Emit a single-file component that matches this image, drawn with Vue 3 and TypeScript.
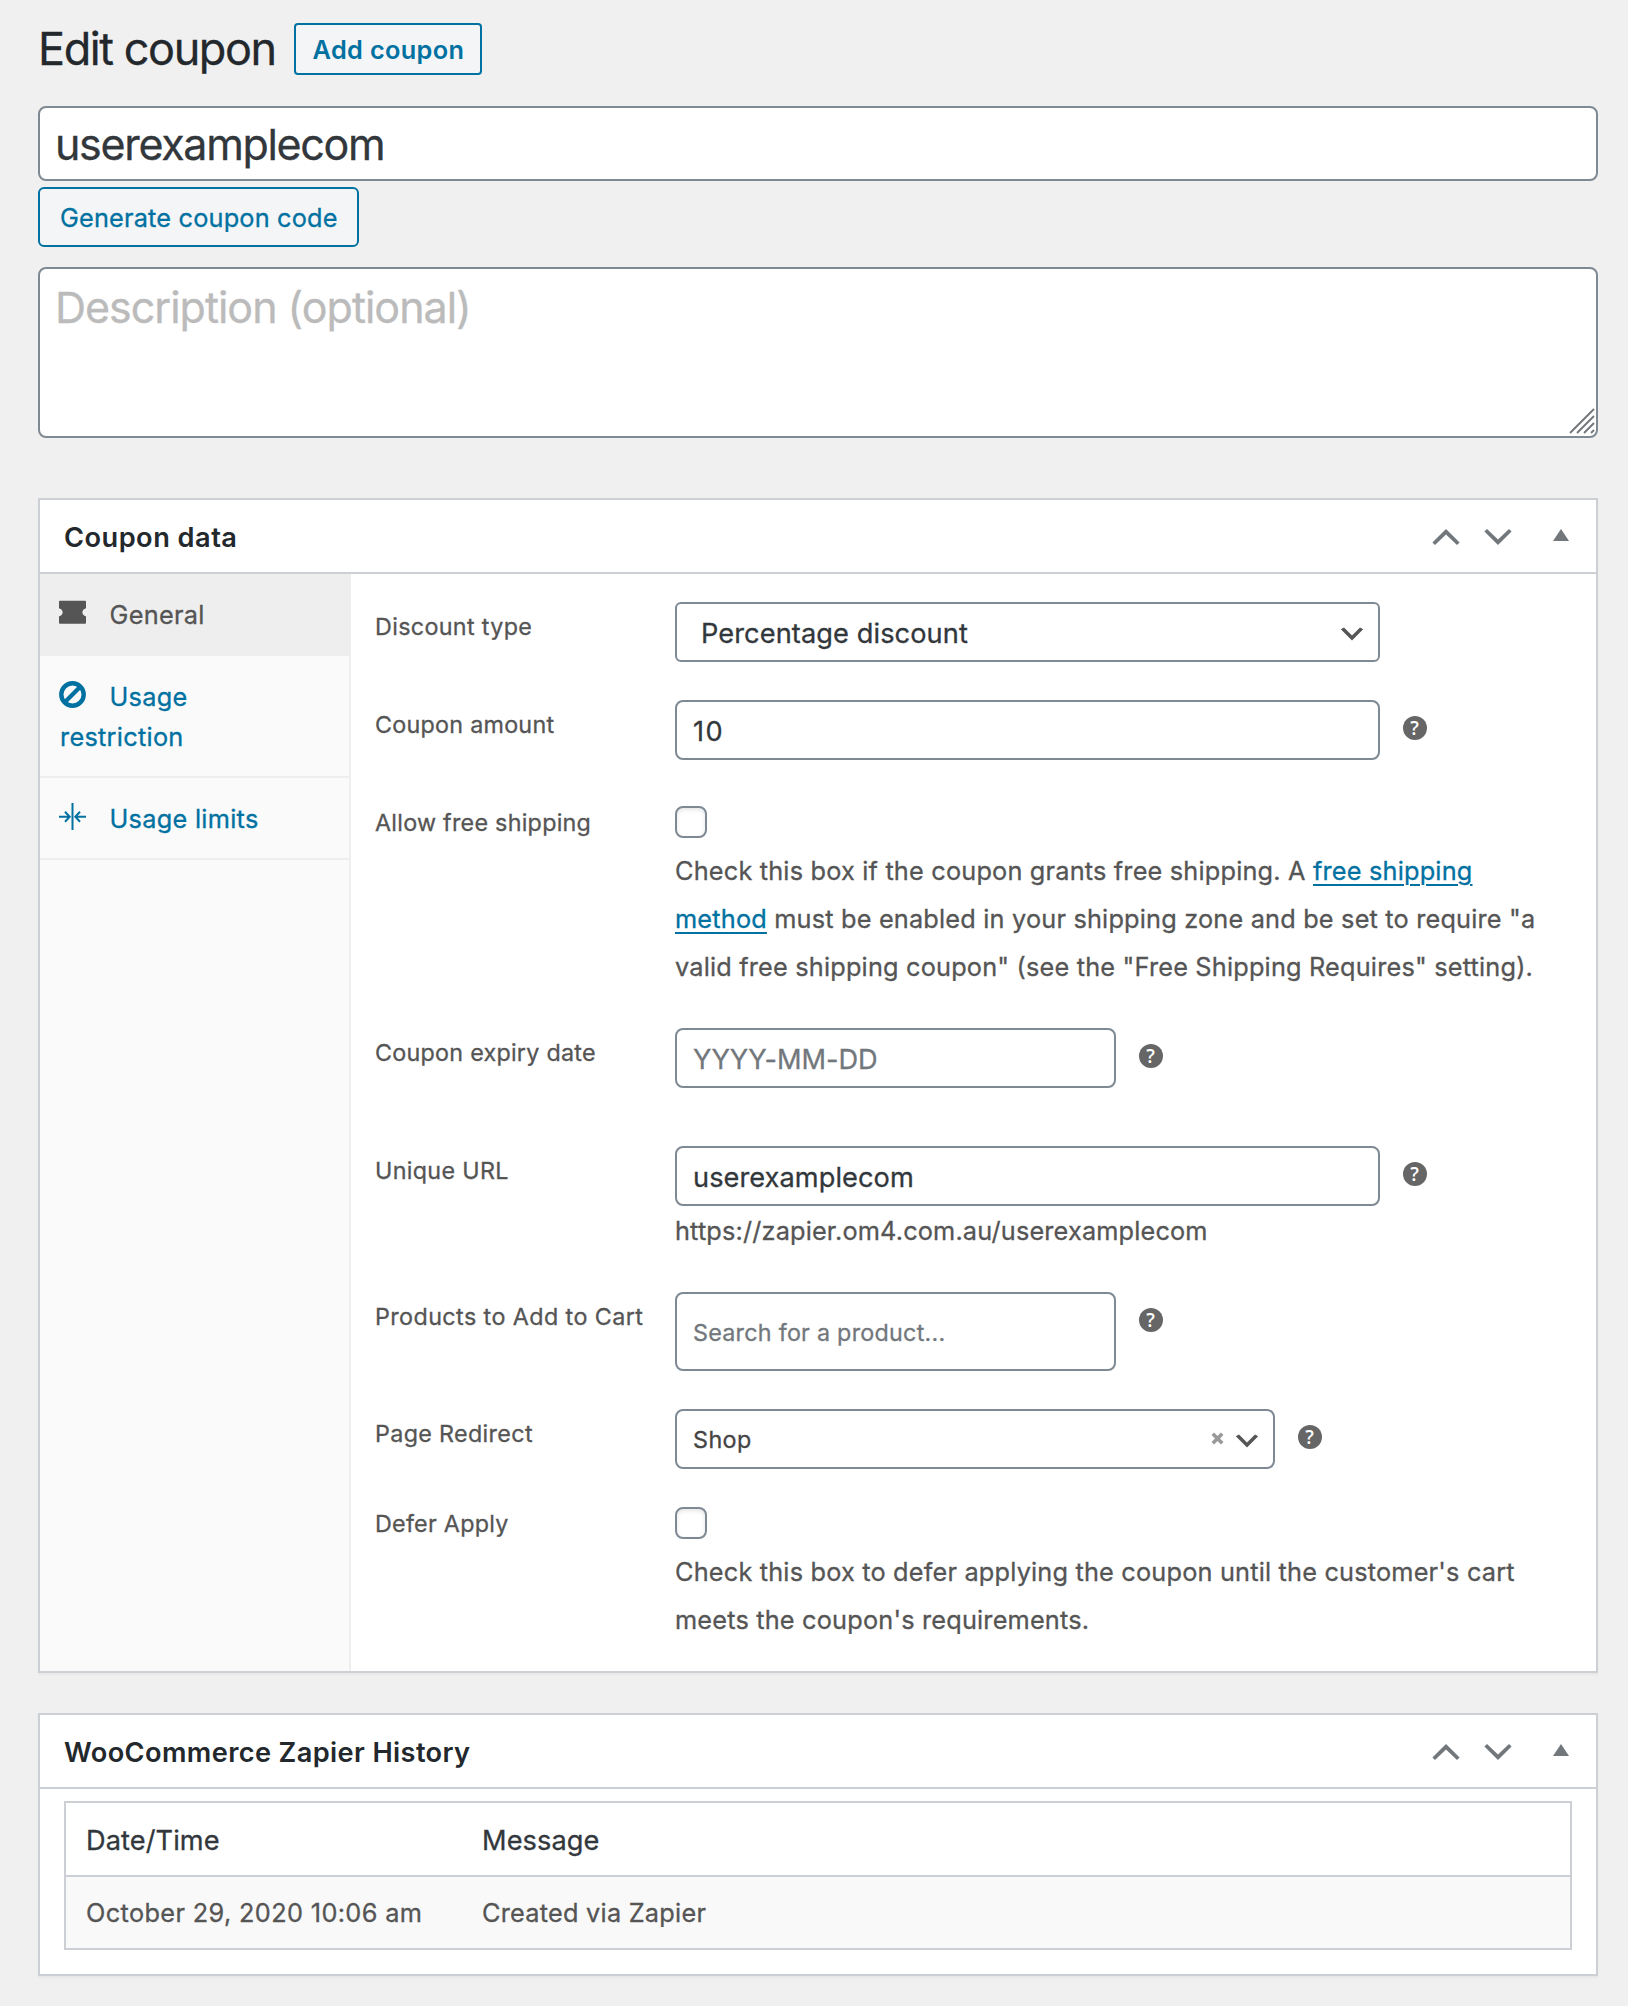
<script setup lang="ts">
import { ref } from 'vue'

interface Tab {
  id: string
  label: string
  icon: 'ticket' | 'ban' | 'limits'
}

interface HistoryEntry {
  date: string
  message: string
}

const tabs: Tab[] = [
  { id: 'general', label: 'General', icon: 'ticket' },
  { id: 'restriction', label: 'Usage restriction', icon: 'ban' },
  { id: 'limits', label: 'Usage limits', icon: 'limits' },
]
const activeTab = ref('general')

const code = ref('userexamplecom')
const description = ref('')
const amount = ref('10')
const discountType = ref('percent')
const freeShipping = ref(false)
const expiry = ref('')
const slug = ref('userexamplecom')
const deferApply = ref(false)

const history: HistoryEntry[] = [
  { date: 'October 29, 2020 10:06 am', message: 'Created via Zapier' },
]
</script>

<template>
  <main class="page">
    <header class="page-head">
      <h1>Edit coupon</h1>
      <a class="add-button">Add coupon</a>
    </header>

    <input v-model="code" class="title-input" type="text" />
    <button class="generate" type="button">Generate coupon code</button>
    <div class="desc-wrap">
      <textarea v-model="description" placeholder="Description (optional)"></textarea>
      <svg class="resizer" viewBox="0 0 26 26" aria-hidden="true">
        <path d="M1 25L25 1M8 25L25 8M15 25L25 15M22 25L25 22" />
      </svg>
    </div>

    <section class="panel">
      <div class="panel-head">
        <h2 class="h-coupon">Coupon data</h2>
        <div class="handles">
          <svg class="chev" viewBox="0 0 28 16"><path d="M.4 13.4L14 0l13.6 13.4L25 16 14 5.600 3 16z" /></svg>
          <svg class="chev" viewBox="0 0 28 16"><path d="M.4 2.600L14 16 27.600 2.600 25 0 14 10.400 3 0z" /></svg>
          <svg class="tri" viewBox="0 0 16 12"><path d="M8 0l8 12H0z" /></svg>
        </div>
      </div>
      <div class="coupon-body">
        <ul class="tabs">
          <li v-for="tab in tabs" :key="tab.id" :class="{ active: tab.id === activeTab }" @click="activeTab = tab.id">
            <svg v-if="tab.icon === 'ticket'" class="tab-icon" viewBox="0 0 27 27">
              <path fill="currentColor" d="M1 1.700h25a1 1 0 0 1 1 1V9.200q-3.600 1-3.600 4t3.600 4v6.500a1 1 0 0 1-1 1H1a1 1 0 0 1-1-1V17.200q3.600-1 3.600-4t-3.600-4V2.700a1 1 0 0 1 1-1z" />
            </svg>
            <svg v-else-if="tab.icon === 'ban'" class="tab-icon" viewBox="0 0 27 27">
              <g fill="none" stroke="currentColor">
                <circle cx="13.500" cy="13.500" r="11.200" stroke-width="4.400" />
                <path d="M6 21L21 6" stroke-width="4.200" />
              </g>
            </svg>
            <svg v-else class="tab-icon" viewBox="0 0 27 27">
              <path fill="none" stroke="currentColor" stroke-width="2" d="M13.500 0v27M0 13.700h10.500M6 8.700l4.700 5-4.700 5M27 13.700H16.500M21 8.700l-4.700 5 4.700 5" />
            </svg><span>{{ tab.label }}</span>
          </li>
        </ul>

        <div class="fields">
          <div class="row">
            <label>Discount type</label>
            <div class="control wide">
              <select v-model="discountType">
                <option value="percent">Percentage discount</option>
              </select>
              <svg class="arrow" viewBox="0 0 20 20"><path d="M5 6l5 5 5-5 2 1-7 7-7-7z" /></svg>
            </div>
          </div>

          <div class="row r-amount">
            <label class="tight">Coupon amount</label>
            <div class="control wide"><input v-model="amount" class="amount" type="text" /></div>
            <span class="help">?</span>
          </div>

          <div class="row r-check r-shipping">
            <label class="tight">Allow free shipping</label>
            <div class="stack">
              <input v-model="freeShipping" type="checkbox" />
              <p>Check this box if the coupon grants free shipping. A <a>free shipping method</a> must be enabled in your shipping zone and be set to require "a valid free shipping coupon" (see the "Free Shipping Requires" setting).</p>
            </div>
          </div>

          <div class="row r-expiry">
            <label class="tight">Coupon expiry date</label>
            <div class="control short"><input v-model="expiry" class="date" type="text" placeholder="YYYY-MM-DD" /></div>
            <span class="help">?</span>
          </div>

          <div class="row r-url">
            <label>Unique URL</label>
            <div class="stack">
              <div class="line">
                <div class="control wide"><input v-model="slug" type="text" /></div>
                <span class="help">?</span>
              </div>
              <p class="url">https://zapier.om4.com.au/userexamplecom</p>
            </div>
          </div>

          <div class="row r-products">
            <label class="loose">Products to Add to Cart</label>
            <div class="combo search">Search for a product...</div>
            <span class="help">?</span>
          </div>

          <div class="row r-redirect">
            <label>Page Redirect</label>
            <div class="combo redirect">
              <span>Shop</span>
              <svg class="clear" viewBox="0 0 13 13"><path d="M1.800 1.800l9.400 9.400M11.200 1.800l-9.400 9.400" /></svg>
              <svg class="arrow" viewBox="0 0 20 20"><path d="M5 6l5 5 5-5 2 1-7 7-7-7z" /></svg>
            </div>
            <span class="help">?</span>
          </div>

          <div class="row r-check r-defer">
            <label class="tight">Defer Apply</label>
            <div class="stack">
              <input v-model="deferApply" type="checkbox" />
              <p>Check this box to defer applying the coupon until the customer's cart meets the coupon's requirements.</p>
            </div>
          </div>
        </div>
      </div>
    </section>

    <section class="panel history">
      <div class="panel-head">
        <h2>WooCommerce Zapier History</h2>
        <div class="handles">
          <svg class="chev" viewBox="0 0 28 16"><path d="M.4 13.4L14 0l13.6 13.4L25 16 14 5.600 3 16z" /></svg>
          <svg class="chev" viewBox="0 0 28 16"><path d="M.4 2.600L14 16 27.600 2.600 25 0 14 10.400 3 0z" /></svg>
          <svg class="tri" viewBox="0 0 16 12"><path d="M8 0l8 12H0z" /></svg>
        </div>
      </div>
      <div class="table">
        <div class="tr th"><span>Date/Time</span><span>Message</span></div>
        <div v-for="entry in history" :key="entry.date" class="tr td">
          <span class="when">{{ entry.date }}</span><span class="what">{{ entry.message }}</span>
        </div>
      </div>
    </section>
  </main>
</template>

<style>
body {
  background: #f0f0f0;
}
</style>

<style scoped>
* {
  box-sizing: border-box;
}
.page {
  min-height: 2006px;
  padding: 23px 30px 30px 38px;
  background: #f0f0f0;
  font-family: Inter, "Liberation Sans", sans-serif;
  font-size: 25.3px;
  color: #555;
  -webkit-text-stroke: 0.3px currentColor;
}
input,
select,
textarea,
button {
  font-family: inherit;
  -webkit-text-stroke: inherit;
  margin: 0;
  outline: none;
}
.page-head {
  display: flex;
  height: 52px;
  margin-bottom: 31px;
}
h1 {
  margin: 0;
  width: 256px;
  white-space: nowrap;
  font-size: 45px;
  font-weight: 400;
  line-height: 52px;
  letter-spacing: -1.42px;
  color: #23282d;
}
.add-button {
  width: 188px;
  height: 52px;
  padding-left: 16.5px;
  border: 2px solid #0071a1;
  border-radius: 4px;
  background: #f3f5f6;
  color: #0071a1;
  font-size: 25.3px;
  font-weight: 600;
  line-height: 49px;
  letter-spacing: 0.36px;
  -webkit-text-stroke: 0;
}
.title-input {
  display: block;
  width: 1560px;
  height: 75px;
  padding: 1px 15px 0;
  border: 2px solid #7e8993;
  border-radius: 8px;
  background: #fff;
  font-size: 43px;
  letter-spacing: -1.32px;
  color: #32373c;
}
.generate {
  display: block;
  width: 321px;
  height: 60px;
  margin-top: 6px;
  padding: 0 0 0 20px;
  border: 2px solid #0071a1;
  border-radius: 6px;
  background: #f3f5f6;
  color: #0071a1;
  font-size: 25.3px;
  letter-spacing: 0.18px;
  text-align: left;
}
.desc-wrap {
  position: relative;
  width: 1560px;
  height: 171px;
  margin: 20px 0 60px;
}
textarea {
  display: block;
  width: 100%;
  height: 100%;
  padding: 8px 15px;
  resize: none;
  border: 2px solid #7e8993;
  border-radius: 8px;
  background: #fff;
  font-size: 43px;
  line-height: 60px;
  letter-spacing: -1.01px;
  color: #32373c;
}
textarea::placeholder {
  color: #bbb;
}
.resizer {
  position: absolute;
  right: 3px;
  bottom: 4px;
  width: 26px;
  height: 26px;
  fill: none;
  stroke: #72777c;
  stroke-width: 1.9;
}
.panel {
  width: 1560px;
  border: 2px solid #ccd0d4;
  background: #fff;
  box-shadow: 0 2px 2px rgba(0, 0, 0, 0.04);
}
.panel-head {
  display: flex;
  justify-content: space-between;
  height: 74px;
  padding: 0 27px 0 24px;
  border-bottom: 2px solid #ccd0d4;
}
h2 {
  margin: 0;
  font-size: 27.2px;
  font-weight: 600;
  line-height: 75px;
  letter-spacing: 0.38px;
  color: #23282d;
  -webkit-text-stroke: 0;
}
.h-coupon {
  letter-spacing: 0.48px;
}
.handles {
  display: flex;
  padding-top: 29px;
}
.handles svg {
  fill: #72777c;
}
.chev {
  width: 28px;
  height: 16px;
  margin-right: 24px;
}
.tri {
  width: 16px;
  height: 12px;
  margin-left: 17px;
}
.coupon-body {
  display: flex;
  height: 1097px;
}
.tabs {
  width: 311px;
  margin: 0;
  padding: 0;
  list-style: none;
  background: #fafafa;
  border-right: 2px solid #eee;
  line-height: 40px;
  letter-spacing: 0.34px;
  color: #0071a1;
}
.tabs li {
  padding: 21px 40px 19px 20px;
  border-bottom: 2px solid #eee;
}
.tabs li.active {
  background: #eee;
  color: #555;
}
.tab-icon {
  width: 27px;
  height: 27px;
  margin: 0 23.5px 0 -1px;
  vertical-align: -1.5px;
}
.tabs span {
  letter-spacing: 0.28px;
}
.fields {
  flex: 1;
  padding: 28px 0 0 24px;
}
.row {
  display: flex;
  align-items: flex-start;
}
label {
  width: 300px;
  flex: none;
  font-size: 23.3px;
  line-height: 50px;
  letter-spacing: 0.34px;
  white-space: nowrap;
}
label.tight {
  letter-spacing: 0.26px;
}
label.loose {
  letter-spacing: 0.42px;
}
.control {
  position: relative;
  height: 60px;
}
.wide {
  width: 705px;
}
.short {
  width: 441px;
}
.control input,
.control select {
  display: block;
  width: 100%;
  height: 60px;
  padding: 2px 16px 0;
  border: 2px solid #7e8993;
  border-radius: 8px;
  background: #fff;
  font-size: 27.2px;
  letter-spacing: 0.06px;
  color: #32373c;
}
.control select {
  appearance: none;
  padding-left: 24px;
  border-radius: 6px;
  letter-spacing: 0.09px;
}
.control .amount {
  letter-spacing: 1.5px;
}
.control .date {
  letter-spacing: -0.05px;
}
.date::placeholder {
  color: #72777c;
}
.arrow {
  position: absolute;
  top: 16px;
  right: 12px;
  width: 32px;
  height: 32px;
  fill: #555;
}
.combo .arrow {
  top: 14px;
  right: 10px;
}
.help {
  width: 24px;
  height: 24px;
  margin: 16px 0 0 22.7px;
  border-radius: 50%;
  background: #666;
  color: #fff;
  font-family: "Open Sans", sans-serif;
  font-size: 19px;
  font-weight: 600;
  line-height: 24px;
  text-align: center;
  -webkit-text-stroke: 0;
}
.r-amount {
  margin-top: 38px;
}
.r-check label {
  margin-top: -8px;
}
.r-shipping {
  margin-top: 46px;
}
.r-expiry {
  margin-top: 37px;
}
.r-url {
  margin-top: 58px;
}
.r-products {
  margin-top: 37px;
}
.r-redirect {
  margin-top: 38px;
}
.r-defer {
  margin-top: 38px;
}
.stack p {
  width: 872px;
  margin: 9px 0 0;
  line-height: 48px;
  letter-spacing: 0.185px;
}
.stack .url {
  margin-top: 1px;
  letter-spacing: 0.16px;
}
.stack a {
  color: #0071a1;
  text-decoration: underline;
  text-decoration-thickness: 2px;
  text-underline-offset: 4px;
}
.line {
  display: flex;
}
input[type="checkbox"] {
  appearance: none;
  display: block;
  width: 32px;
  height: 32px;
  border: 2px solid #7e8993;
  border-radius: 8px;
  background: #fff;
  box-shadow: inset 0 2px 4px rgba(0, 0, 0, 0.1);
}
.combo {
  position: relative;
  padding-left: 16px;
  border: 2px solid #7e8993;
  border-radius: 8px;
  background: #fff;
  font-size: 23.3px;
}
.search {
  width: 441px;
  height: 79px;
  line-height: 77px;
  letter-spacing: 0.26px;
  color: #72777c;
}
.redirect {
  width: 600px;
  height: 60px;
  line-height: 57px;
  letter-spacing: 0.43px;
  color: #444;
}
.clear {
  position: absolute;
  top: 21px;
  right: 49.5px;
  width: 13px;
  height: 13px;
  fill: none;
  stroke: #999;
  stroke-width: 3.6;
}
.history {
  margin-top: 40px;
}
.table {
  margin: 12px 24px 24px;
  border: 2px solid #ccd0d4;
}
.tr {
  display: grid;
  grid-template-columns: 396px 1fr;
  padding-left: 20px;
}
.th {
  height: 74px;
  border-bottom: 2px solid #ccd0d4;
  font-size: 27.2px;
  line-height: 75px;
  letter-spacing: 0.08px;
  color: #32373c;
}
.td {
  height: 71px;
  background: #f9f9f9;
  line-height: 71px;
}
.when {
  letter-spacing: 0.36px;
}
.what {
  letter-spacing: 0.24px;
}
</style>
